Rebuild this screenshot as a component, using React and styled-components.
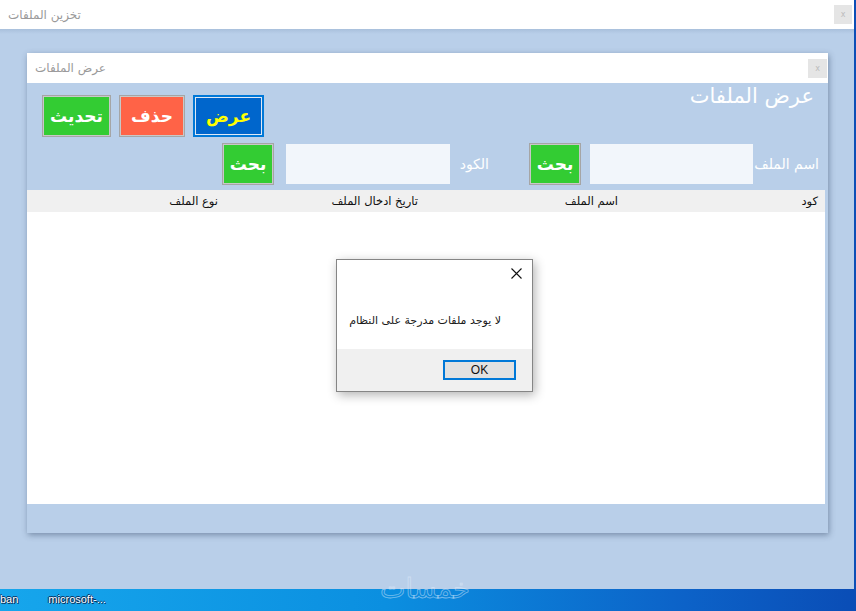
import React from "react";
import styled, { createGlobalStyle } from "styled-components";

const GlobalStyle = createGlobalStyle`
  html, body {
    margin: 0;
    padding: 0;
    background: #0c4fb6;
    overflow: hidden;
  }
  * {
    box-sizing: border-box;
  }
`;

const Desktop = styled.div`
  width: 856px;
  height: 611px;
  display: flex;
  flex-direction: column;
  background: #0c4fb6;
  font-family: "DejaVu Sans", "Noto Sans", sans-serif;
`;

const Window = styled.div`
  width: 854px;
  height: 589px;
  display: flex;
  flex-direction: column;
  background: #b9cfe9;
`;

const TitleBar = styled.div`
  height: ${(p) => p.$h}px;
  flex: none;
  display: flex;
  justify-content: space-between;
  align-items: center;
  padding: 0 ${(p) => p.$pr}px 0 ${(p) => p.$pl}px;
  background: #fff;
`;

const TitleText = styled.span`
  font-size: 12px;
  color: #9a9a9a;
  direction: rtl;
`;

const CloseBox = styled.div`
  width: ${(p) => p.$w}px;
  height: 19px;
  background: #e5e5e5;
  color: #bcbcbc;
  font-size: 8px;
  display: flex;
  align-items: center;
  justify-content: center;
`;

const WindowBody = styled.div`
  flex: 1;
  padding: 24px 26px 0 27px;
  background: linear-gradient(#a9c0dc, #b9cfe9 5px);
`;

const InnerWindow = styled.div`
  width: 801px;
  height: 480px;
  display: flex;
  flex-direction: column;
  background: #b9cfe9;
  box-shadow: 1px 2px 6px rgba(40, 60, 90, 0.45);
`;

const InnerBody = styled.div`
  flex: 1;
  position: relative;
  display: flex;
  flex-direction: column;
  padding-right: 3px;
`;

const TopRow = styled.div`
  height: 58px;
  display: flex;
  justify-content: space-between;
  align-items: flex-start;
  padding: 12px 11px 0 15px;
`;

const ButtonGroup = styled.div`
  display: flex;
  gap: 8px;
`;

const ActionButton = styled.div`
  width: ${(p) => p.$w}px;
  height: ${(p) => p.$h || 42}px;
  flex: none;
  display: flex;
  align-items: center;
  justify-content: center;
  background: ${(p) => p.$bg};
  color: ${(p) => p.$fg || "#fff"};
  border: 2px solid ${(p) => p.$border || "#c8c8c8"};
  outline: 1px solid ${(p) => p.$outline || "#a5a5a5"};
  outline-offset: -1px;
  box-shadow: inset 0 0 0 ${(p) => (p.$inset ? 1 : 0)}px #dfe8f5;
  font-size: 17px;
  font-weight: bold;
  direction: rtl;
`;

const Heading = styled.div`
  margin-top: -11px;
  font-size: 21px;
  color: #fff;
  direction: rtl;
`;

const SearchRow = styled.div`
  height: 49px;
  display: flex;
  direction: rtl;
  align-items: center;
  padding-bottom: 3px;
`;

const FieldLabel = styled.span`
  width: ${(p) => p.$w}px;
  flex: none;
  padding-right: ${(p) => p.$pr}px;
  font-size: 14px;
  color: #fff;
  white-space: nowrap;
`;

const Field = styled.div`
  width: ${(p) => p.$w}px;
  height: 40px;
  flex: none;
  background: #f2f6fb;
  margin-left: ${(p) => p.$ml}px;
`;

const Table = styled.div`
  height: 314px;
  display: flex;
  flex-direction: column;
  background: #fff;
`;

const HeaderRow = styled.div`
  height: 22px;
  display: grid;
  grid-template-columns: repeat(4, 200px);
  direction: rtl;
  background: #f0f0f0;
`;

const HeaderCell = styled.div`
  padding-right: 7px;
  font-size: 11.5px;
  line-height: 23px;
  color: #111;
`;

const Dialog = styled.div`
  position: absolute;
  left: 309px;
  top: 176px;
  width: 197px;
  height: 133px;
  display: flex;
  flex-direction: column;
  background: #fff;
  border: 1px solid #858585;
  box-shadow: 2px 3px 10px rgba(0, 0, 0, 0.3);
`;

const DialogMain = styled.div`
  flex: 1;
  position: relative;
  display: flex;
  align-items: center;
  justify-content: flex-end;
  padding: 32px 31px 0 0;
`;

const DialogClose = styled.svg`
  position: absolute;
  top: 8px;
  right: 10px;
`;

const DialogText = styled.span`
  font-size: 11px;
  color: #1a1a1a;
  direction: rtl;
`;

const DialogFooter = styled.div`
  height: 42px;
  display: flex;
  justify-content: flex-end;
  align-items: center;
  padding-right: 16px;
  background: #f0f0f0;
`;

const OkButton = styled.div`
  width: 73px;
  height: 20px;
  display: flex;
  align-items: center;
  justify-content: center;
  background: #e1e1e1;
  border: 2px solid #0078d7;
  font-family: "Liberation Sans", Arial, sans-serif;
  font-size: 12px;
  color: #111;
`;

const Taskbar = styled.div`
  flex: 1;
  display: flex;
  align-items: center;
  gap: 30px;
  position: relative;
  padding-bottom: 2px;
  background: linear-gradient(90deg, #16a6ec 0%, #0b8fe0 45%, #0c62c8 80%, #0a4db6 100%);
`;

const TaskLabel = styled.span`
  font-family: "Liberation Sans", Arial, sans-serif;
  font-size: 11px;
  color: #fff;
  text-shadow: 1px 1px 0 #0a2a55, -1px 0 0 #0a2a55, 0 -1px 0 #0a2a55;
`;

const Watermark = styled.span`
  position: absolute;
  left: 380px;
  top: -16px;
  font-size: 27px;
  color: transparent;
  -webkit-text-stroke: 0.8px rgba(225, 238, 252, 0.5);
  direction: rtl;
`;

export default function App() {
  return (
    <>
      <GlobalStyle />
      <Desktop>
        <Window>
          <TitleBar $h={29} $pl={8} $pr={2}>
            <TitleText>تخزين الملفات</TitleText>
            <CloseBox $w={18}>x</CloseBox>
          </TitleBar>
          <WindowBody>
            <InnerWindow>
              <TitleBar $h={30} $pl={8} $pr={1}>
                <TitleText>عرض الملفات</TitleText>
                <CloseBox $w={19}>x</CloseBox>
              </TitleBar>
              <InnerBody>
                <TopRow>
                  <ButtonGroup>
                    <ActionButton $w={69} $bg="#33cc33">تحديث</ActionButton>
                    <ActionButton $w={66} $bg="#ff6347">حذف</ActionButton>
                    <ActionButton
                      $w={71}
                      $bg="#0066cc"
                      $fg="#ffff00"
                      $border="#0078d7"
                      $outline="#0078d7"
                      $inset
                    >
                      عرض
                    </ActionButton>
                  </ButtonGroup>
                  <Heading>عرض الملفات</Heading>
                </TopRow>
                <SearchRow>
                  <FieldLabel $w={72} $pr={6}>اسم الملف</FieldLabel>
                  <Field $w={163} $ml={9} />
                  <ActionButton $w={52} $bg="#33cc33">بحث</ActionButton>
                  <FieldLabel $w={79} $pr={40}>الكود</FieldLabel>
                  <Field $w={164} $ml={12} />
                  <ActionButton $w={52} $bg="#33cc33">بحث</ActionButton>
                </SearchRow>
                <Table>
                  <HeaderRow>
                    <HeaderCell>كود</HeaderCell>
                    <HeaderCell>اسم الملف</HeaderCell>
                    <HeaderCell>تاريخ ادخال الملف</HeaderCell>
                    <HeaderCell>نوع الملف</HeaderCell>
                  </HeaderRow>
                </Table>
                <Dialog>
                  <DialogMain>
                    <DialogClose width="11" height="11" viewBox="0 0 11 11">
                      <path d="M0.5 0.5 L10.5 10.5 M10.5 0.5 L0.5 10.5" stroke="#111" strokeWidth="1.1" />
                    </DialogClose>
                    <DialogText>لا يوجد ملفات مدرجة على النظام</DialogText>
                  </DialogMain>
                  <DialogFooter>
                    <OkButton>OK</OkButton>
                  </DialogFooter>
                </Dialog>
              </InnerBody>
            </InnerWindow>
          </WindowBody>
        </Window>
        <Taskbar>
          <TaskLabel>ban</TaskLabel>
          <TaskLabel>microsoft-...</TaskLabel>
          <Watermark>خمسات</Watermark>
        </Taskbar>
      </Desktop>
    </>
  );
}
